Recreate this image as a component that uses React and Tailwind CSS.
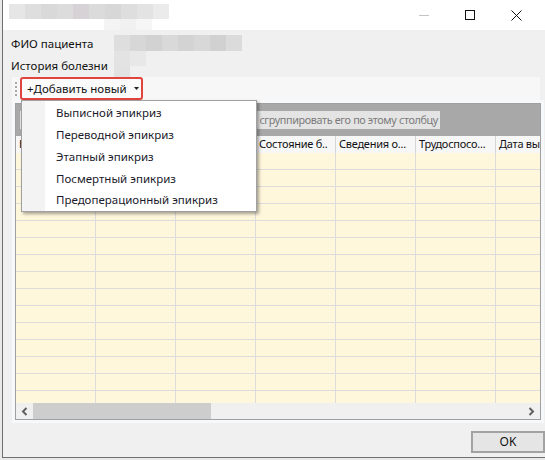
import { useState } from 'react';

const titleBlur = ['#e6e6e6', '#dedede', '#d9d9d9', '#dcdcdc', '#d6d2d5', '#dbdbdb', '#d7d7d7', '#dedede', '#e3e3e3', '#ebebeb'];
const nameBlur = ['#dedede', '#d7d7d7', '#d2d2d2', '#d9d9d9', '#d3d3d3', '#d8d8d8', '#d1d1d1', '#dbdbdb'];

const headers = ['Номер', 'Дата', 'Врач', 'Состояние б..', 'Сведения о...', 'Трудоспосо...', 'Дата вы'];

const menuItems = [
  'Выписной эпикриз',
  'Переводной эпикриз',
  'Этапный эпикриз',
  'Посмертный эпикриз',
  'Предоперационный эпикриз',
];

function Grip() {
  return (
    <div className="flex flex-col gap-[2px] w-[2px] mr-[3px]">
      {[0, 1, 2, 3].map(i => (
        <div key={i} className="w-[2px] h-[2px] bg-[#a8a8a8]" />
      ))}
    </div>
  );
}

function TitleBar() {
  return (
    <div className="h-[30px] bg-white flex items-start shrink-0">
      <div className="pl-[6px] pt-[4px] flex flex-col">
        <div className="flex">
          {titleBlur.map((c, i) => (
            <div key={i} className="w-[16px] h-[15px]" style={{ background: c }} />
          ))}
        </div>
        <div className="flex ml-[95px]">
          <div className="w-[16px] h-[11px] bg-[#f4f4f4]" />
          <div className="w-[16px] h-[11px] bg-[#f1f1f1]" />
          <div className="w-[16px] h-[11px] bg-[#f6f6f6]" />
        </div>
      </div>
      <div className="ml-auto flex items-center h-[30px]">
        <div className="w-[46px] h-[30px] flex items-center justify-center">
          <div className="w-[10px] h-px bg-[#c4c4c4]" />
        </div>
        <div className="w-[46px] h-[30px] flex items-center justify-center">
          <div className="w-[10px] h-[10px] border border-[#111]" />
        </div>
        <div className="w-[46px] h-[30px] flex items-center justify-center">
          <svg width="11" height="11" viewBox="0 0 11 11">
            <path d="M0.5 0.5 L10.5 10.5 M10.5 0.5 L0.5 10.5" stroke="#111" strokeWidth="1" />
          </svg>
        </div>
        <div className="w-[6px]" />
      </div>
    </div>
  );
}

function DropMenu() {
  return (
    <div className="absolute left-[9px] top-[23px] w-[236px] h-[112px] bg-white border border-[#a0a0a0] shadow-[2px_2px_3px_rgba(0,0,0,0.35)] flex z-10">
      <div className="w-[23px] bg-[#f3f3f3] shrink-0" />
      <div className="flex flex-col pt-px">
        {menuItems.map(t => (
          <div key={t} className="h-[22px] flex items-center pl-[11px] text-[11.5px] text-[#1b1b2b] whitespace-nowrap">
            {t}
          </div>
        ))}
      </div>
    </div>
  );
}

function Toolbar({ open }) {
  return (
    <div className="relative ml-[9px] w-[528px] h-[23px] bg-[#f7f7f7] flex items-center pl-[3px]">
      <Grip />
      <div className="h-[23px] w-[123px] border-2 border-[#e0443c] rounded-[3px] bg-[#fbfbfb] flex items-center pl-[5px] text-[11.5px] text-[#111] whitespace-nowrap">
        <span>+Добавить новый</span>
        <svg className="ml-[7px]" width="5" height="3" viewBox="0 0 5 3">
          <path d="M0 0 H5 L2.5 3 Z" fill="#222" />
        </svg>
      </div>
      {open && <DropMenu />}
    </div>
  );
}

function Grid() {
  const rows = Array.from({ length: 15 });
  return (
    <div className="ml-[9px] w-[532px] h-[323px] bg-[#f7f8fa] p-[3px]">
      <div className="w-[526px] h-[317px] border border-[#a0a0a0] flex flex-col overflow-hidden">
        <div className="h-[32px] bg-[#a8a8a8] pt-[7px] pl-[4px] shrink-0">
          <div className="w-[420px] h-[18px] bg-[#e4e4e4] flex items-center justify-end pr-[2px] overflow-hidden whitespace-nowrap text-[10.8px] tracking-[-0.35px] text-[#7b7b7b]">
            Перетащите сюда заголовок столбца, чтобы сгруппировать его по этому столбцу
          </div>
        </div>
        <div className="h-[17px] bg-[#f7f7f7] flex shrink-0">
          {headers.map((h, i) => (
            <div key={i} className={`h-[17px] flex items-center pl-[3px] text-[11px] tracking-[-0.25px] text-[#111] whitespace-nowrap overflow-hidden ${i < 6 ? 'w-[80px] border-r border-[#d5d5d5]' : 'flex-1'}`}>
              {h}
            </div>
          ))}
        </div>
        <div className="h-[250px] overflow-hidden bg-[#fff7dc] shrink-0">
          {rows.map((_, r) => (
            <div key={r} className="h-[17px] flex border-b border-[#dcdcdc]">
              {headers.map((_, i) => (
                <div key={i} className={i < 6 ? 'w-[80px] border-r border-[#dcdcdc]' : 'flex-1'} />
              ))}
            </div>
          ))}
        </div>
        <div className="h-[16px] bg-[#f0f0f0] flex items-center shrink-0">
          <div className="w-[17px] h-[16px] flex items-center justify-center">
            <svg width="7" height="9" viewBox="0 0 7 9">
              <path d="M5.5 1 L2 4.5 L5.5 8" stroke="#606060" strokeWidth="2" fill="none" />
            </svg>
          </div>
          <div className="w-[178px] h-[16px] bg-[#cdcdcd]" />
          <div className="ml-auto w-[17px] h-[16px] flex items-center justify-center">
            <svg width="7" height="9" viewBox="0 0 7 9">
              <path d="M1.5 1 L5 4.5 L1.5 8" stroke="#606060" strokeWidth="2" fill="none" />
            </svg>
          </div>
        </div>
      </div>
    </div>
  );
}

export default function App() {
  const [open] = useState(true);

  return (
    <div className="w-[545px] h-[460px] bg-[#e9e9e9] overflow-hidden font-['Segoe_UI','Noto_Sans',sans-serif]">
      <div className="ml-[2px] w-[543px] h-[458px] border-l border-b border-[#6f6f6f] flex flex-col bg-[#f0f0f0]">
        <TitleBar />

        <div className="flex h-[47px] shrink-0">
          <div className="w-[103px] pl-[8px] pt-[3px] text-[11.5px] text-[#111]">
            <div className="h-[22px] flex items-center whitespace-nowrap">ФИО пациента</div>
            <div className="h-[22px] flex items-center whitespace-nowrap">История болезни</div>
          </div>
          <div className="ml-[8px] pt-[5px] flex flex-col">
            <div className="flex">
              {nameBlur.map((c, i) => (
                <div key={i} className="w-[16px] h-[16px]" style={{ background: c }} />
              ))}
            </div>
            <div className="flex">
              <div className="w-[16px] h-[15px] bg-[#e3e3e3]" />
              <div className="w-[16px] h-[15px] bg-[#e8e8e8]" />
            </div>
            <div className="w-[16px] h-[11px] bg-[#e2e2e2]" />
          </div>
        </div>

        <Toolbar open={open} />
        <Grid />

        <div className="mt-[8px] flex justify-end">
          <button className="w-[74px] h-[22px] border-2 border-[#a2a2a2] bg-[#e5e5e5] text-[12px] text-[#111]">
            OK
          </button>
        </div>
      </div>
    </div>
  );
}
